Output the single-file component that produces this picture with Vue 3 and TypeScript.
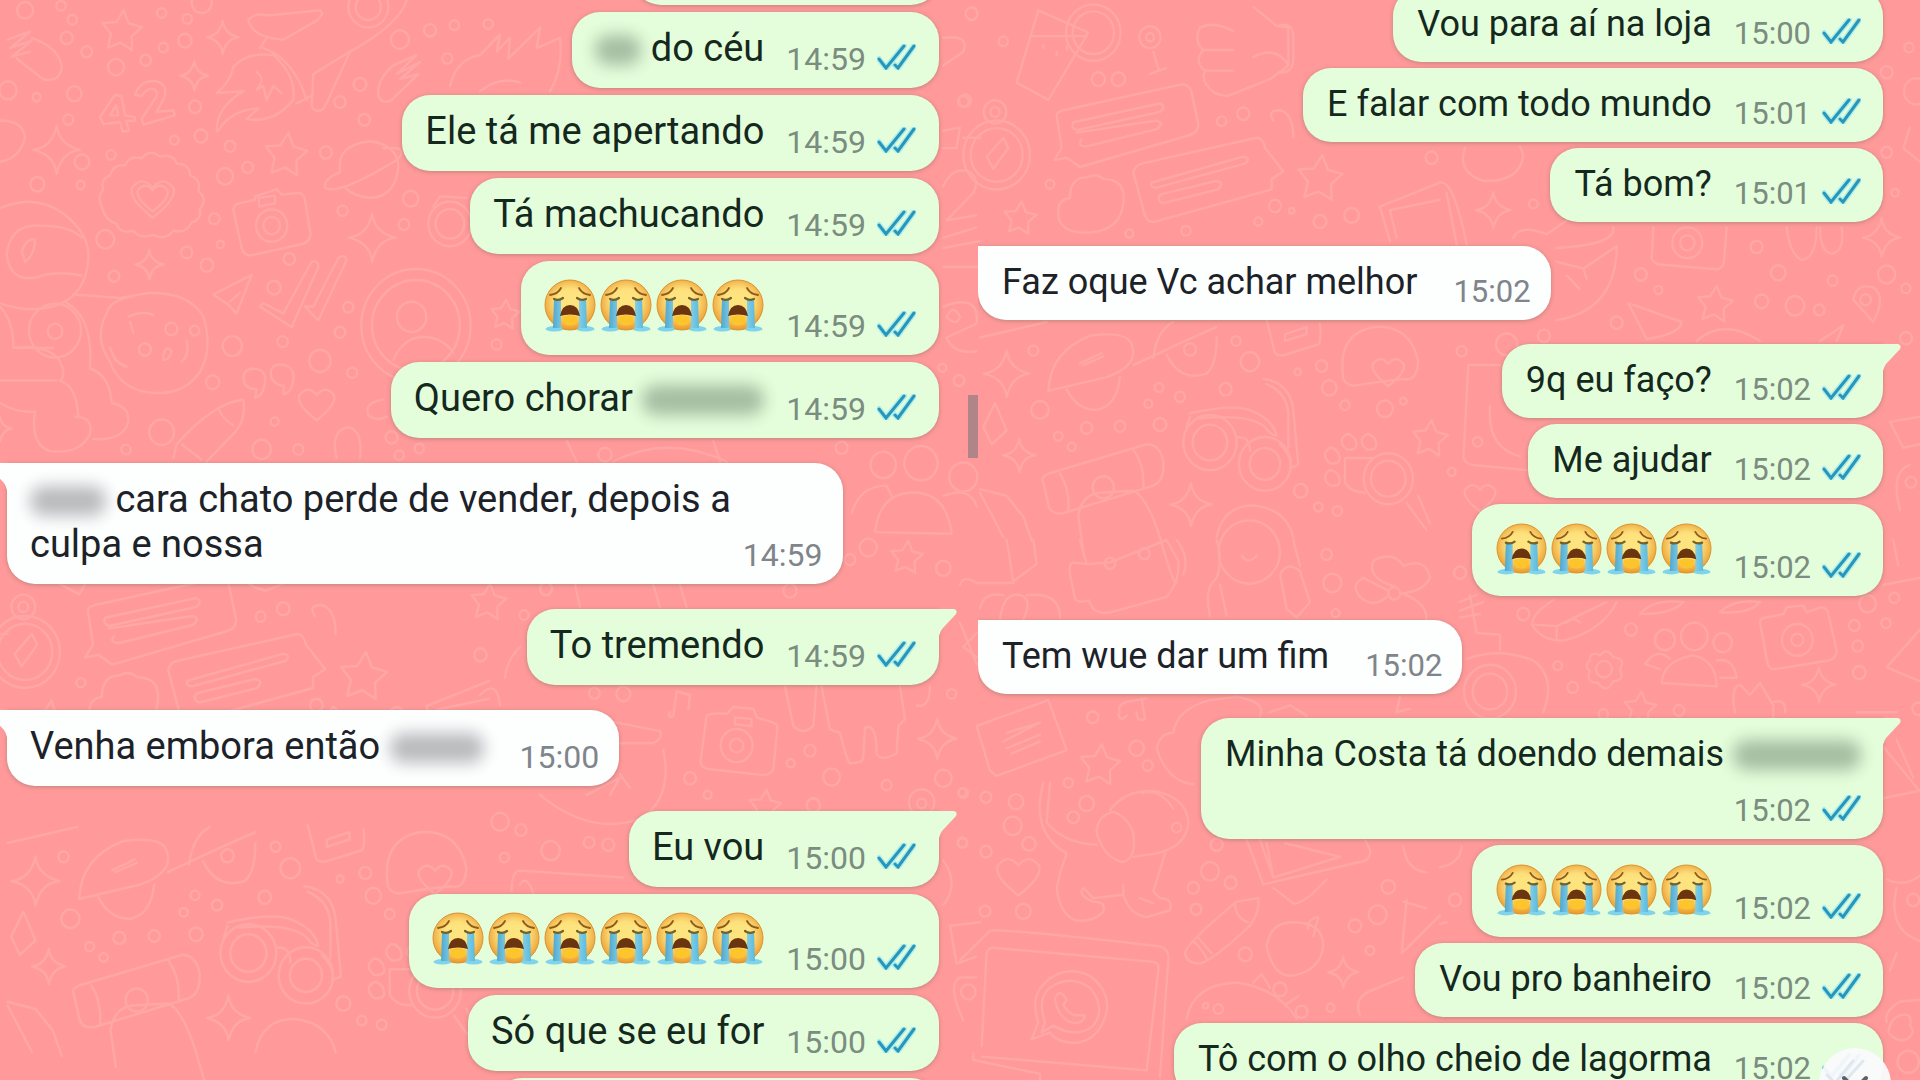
<script setup lang="ts">
interface Segment {
  text?: string
  hidden?: number
}

interface Message {
  side: 'in' | 'out'
  lines?: Segment[][]
  sobs?: number
  time?: string
  first?: boolean
  tail?: boolean
  tight?: boolean
  stacked?: boolean
  clippedWidth?: number
}

interface Doodles {
  name: string
  transform: string
  circles: number[][]
  stars: number[][]
  sparkles: number[][]
  hearts: number[][]
  paths: string[]
}

const say = (text: string): Segment[][] => [[{ text }]]

const leftMessages: Message[] = [
  { side: 'out', clippedWidth: 306 },
  { side: 'out', lines: [[{ hidden: 46 }, { text: ' do céu' }]], time: '14:59' },
  { side: 'out', lines: say('Ele tá me apertando'), time: '14:59' },
  { side: 'out', lines: say('Tá machucando'), time: '14:59' },
  { side: 'out', sobs: 4, time: '14:59' },
  { side: 'out', lines: [[{ text: 'Quero chorar ' }, { hidden: 122 }]], time: '14:59' },
  {
    side: 'in',
    first: true,
    tail: true,
    tight: true,
    lines: [[{ hidden: 76 }, { text: ' cara chato perde de vender, depois a' }], [{ text: 'culpa e nossa' }]],
    time: '14:59',
  },
  { side: 'out', first: true, tail: true, lines: say('To tremendo'), time: '14:59' },
  { side: 'in', first: true, tail: true, lines: [[{ text: 'Venha embora então ' }, { hidden: 94 }]], time: '15:00' },
  { side: 'out', first: true, tail: true, lines: say('Eu vou'), time: '15:00' },
  { side: 'out', sobs: 6, time: '15:00' },
  { side: 'out', lines: say('Só que se eu for'), time: '15:00' },
  { side: 'out', clippedWidth: 445 },
]

const rightMessages: Message[] = [
  { side: 'out', lines: say('Vou para aí na loja'), time: '15:00' },
  { side: 'out', lines: say('E falar com todo mundo'), time: '15:01' },
  { side: 'out', lines: say('Tá bom?'), time: '15:01' },
  { side: 'in', first: true, lines: say('Faz oque Vc achar melhor'), time: '15:02' },
  { side: 'out', first: true, tail: true, lines: say('9q eu faço?'), time: '15:02' },
  { side: 'out', lines: say('Me ajudar'), time: '15:02' },
  { side: 'out', sobs: 4, time: '15:02' },
  { side: 'in', first: true, lines: say('Tem wue dar um fim'), time: '15:02' },
  {
    side: 'out',
    first: true,
    tail: true,
    stacked: true,
    lines: [[{ text: 'Minha Costa tá doendo demais ' }, { hidden: 128 }]],
    time: '15:02',
  },
  { side: 'out', sobs: 4, time: '15:02' },
  { side: 'out', lines: say('Vou pro banheiro'), time: '15:02' },
  { side: 'out', lines: say('Tô com o olho cheio de lagorma'), time: '15:02' },
]

const chats = [
  { name: 'left', messages: leftMessages },
  { name: 'right', messages: rightMessages },
]

// Wallpaper sheets: circles are [x, y, r]; stars, sparkles and hearts are [x, y, size].
const travel = {
  circles: [
    [130, 120, 14], [415, 230, 20], [475, 230, 20], [570, 108, 32], [570, 108, 12], [15, 292, 18], [270, 535, 13],
    [785, 352, 14], [850, 330, 18], [105, 325, 34], [105, 325, 14], [110, 450, 100], [110, 450, 78], [400, 95, 82],
    [400, 95, 62], [945, 598, 18], [1080, 643, 19], [1175, 625, 22], [895, 643, 12], [995, 612, 8], [508, 678, 12],
    [678, 670, 14], [220, 1018, 15], [240, 1190, 26], [380, 1243, 17], [480, 1238, 16], [295, 1267, 13],
    [335, 1297, 12], [600, 1233, 19], [565, 1172, 12], [597, 1125, 13], [660, 1152, 15], [797, 1130, 18],
    [870, 1050, 28], [1085, 1063, 17], [1013, 1080, 10], [1108, 1126, 22], [1155, 1177, 14], [1275, 1187, 24],
    [1330, 1165, 10], [828, 990, 14], [750, 1285, 80], [750, 1285, 52], [915, 1347, 78], [915, 1347, 46],
    [690, 1015, 18], [1285, 1390, 74], [1285, 1390, 52], [1022, 1425, 20], [1075, 1472, 13], [1132, 1484, 14],
    [430, 1415, 32], [1415, 458, 18],
  ],
  stars: [[180, 635, 50], [1080, 520, 70], [1410, 1275, 55]],
  sparkles: [[140, 1085, 68], [178, 1322, 48], [693, 1465, 62]],
  hearts: [[1285, 1075, 46]],
  paths: [
    'M235 30L170 240L265 290L385 95Z M215 105H380 M250 130v10 M290 150v10 M320 135v10',
    'M580 150L597 205M568 215L618 198',
    'M720 80Q760 60 820 90M720 80Q700 120 730 145Q700 180 735 205Q720 240 765 270L800 280L930 230L985 190V80L950 75L880 20 M730 145H820M735 205H820 M880 165Q950 130 985 190 M955 75Q1000 60 1000 110V170Q1000 215 955 210',
    'M290 335Q290 325 310 320L665 245Q690 245 695 270L715 360Q715 385 690 392L360 485L320 458L282 465L305 430Z M340 355L600 300Q620 310 600 325L350 378Q330 370 340 355Z M350 385L590 350Q615 358 590 375L380 425Q350 425 365 405',
    'M520 500Q525 480 545 475L890 400Q910 402 915 430L970 497L935 520V550L580 645Q560 645 553 620Z M575 530L850 455Q875 460 855 475L590 545Q570 545 575 530Z M600 565L770 525Q795 530 775 550L610 590Q590 585 600 565Z',
    'M330 575Q330 515 380 515Q410 500 430 520Q500 520 490 590Q480 670 390 675Q300 680 295 625Q290 580 330 575Z',
    'M80 455L130 400L145 430L100 490Z M10 400H60',
    'M265 1135Q270 1020 390 975Q500 960 515 1000Q540 1060 440 1095ZM360 1055L425 1025M370 1060L430 1035M520 1060L620 1015Q720 970 770 950M580 1040Q590 960 640 935M320 1130Q350 1190 410 1190Q470 1180 480 1095M620 1030Q660 1110 740 1085Q770 1060 770 980',
    'M690 1210L680 1240M690 1200Q830 1170 880 1195Q940 1220 950 1265Q935 1265 920 1245Q880 1200 720 1215M910 1100Q990 1110 1000 1190L1015 1350L990 1360Q1000 1330 960 1290M920 1115Q980 1140 985 1200V1300M830 1270Q870 1265 870 1310',
    'M250 1400Q240 1385 265 1375L560 1290Q600 1290 610 1340Q615 1395 580 1410L310 1490Q270 1495 265 1465ZM300 1375Q330 1420 325 1485M520 1305Q555 1350 550 1420M370 1600L355 1500Q365 1430 430 1430L520 1425Q560 1440 600 1560Q640 1700 650 1690',
    'M920 930L945 1025Q955 1035 975 1030L1075 1000Q1085 990 1080 940M975 970L1040 950V970L975 990Z',
    'M1150 1100Q1130 970 1240 950Q1350 940 1375 1050Q1370 1110 1330 1100Q1240 1110 1180 1120Q1155 1115 1150 1100Z',
    'M1155 1330H1240M1155 1330V1400Q1170 1430 1215 1430 M1340 1460L1400 1540M1375 1440L1410 1520 M1110 1300q-30 20 0 45q40 5 25-30q-10-15-25-15Z M1160 1260q-30 20 0 45q40 5 25-30q-10-15-25-15Z M1220 1260q-30 20 0 45q40 5 25-30q-10-15-25-15Z M1110 1365q-30 20 0 45q40 5 25-30q-10-15-25-15Z',
    'M770 1560Q790 1465 885 1468Q980 1480 1000 1560',
    'M1260 600L1440 530M1260 600L1290 700M1440 580L1290 610L1310 690',
    'M60 980L260 935M95 1290L70 1240L105 1170L140 1250Z M60 1420L140 1440L190 1500L215 1570M60 1430L130 1560',
    'M940 350Q920 320 960 320Q1000 330 1000 400',
  ],
}

const space = {
  name: 'space',
  transform: 'scale(.3333 .3444)',
  circles: [
    [75, 30, 24], [183, 17, 14], [217, 57, 14], [200, 110, 18], [260, 150, 16], [348, 195, 24], [437, 175, 16],
    [490, 138, 14], [555, 118, 20], [485, 38, 14], [605, 8, 30], [562, 55, 14], [24, 262, 26], [110, 282, 12],
    [223, 272, 22], [205, 347, 15], [585, 310, 18], [603, 395, 19], [523, 407, 13], [690, 425, 16], [743, 486, 16],
    [675, 512, 24], [246, 470, 22], [333, 450, 14], [112, 535, 21], [242, 537, 12], [643, 635, 16], [316, 695, 27],
    [342, 802, 16], [560, 733, 17], [621, 770, 19], [661, 710, 11], [1105, 20, 60], [1105, 20, 38], [1200, 115, 27],
    [1290, 88, 18], [1363, 73, 14], [1342, 170, 15], [1080, 245, 19], [1020, 296, 17], [1093, 348, 17],
    [978, 443, 18], [1232, 577, 23], [1212, 652, 16], [1028, 612, 15], [815, 655, 47], [815, 655, 25],
    [868, 752, 17], [822, 835, 20], [1045, 892, 15], [1020, 965, 16], [848, 992, 16], [697, 1005, 29],
    [960, 1048, 32], [638, 1110, 20], [1057, 1082, 15], [824, 1224, 12], [785, 1305, 28], [485, 1255, 37],
    [895, 1305, 15], [378, 1305, 14], [1248, 945, 164], [1248, 945, 132], [1235, 920, 44], [514, 955, 18],
    [584, 960, 14], [435, 1015, 18], [165, 960, 78], [165, 962, 22], [1350, 650, 65], [1350, 650, 43],
    [1175, 1270, 18], [1198, 1322, 14], [1258, 1302, 14],
  ],
  stars: [[365, 92, 62], [858, 452, 66]],
  sparkles: [[170, 435, 70], [668, 108, 48], [583, 220, 42], [1117, 690, 70], [448, 768, 42], [0, 1245, 35]],
  hearts: [[458, 570, 62], [458, 570, 44], [950, 1168, 52]],
  paths: [
    'M22 115L90 92L30 140L95 118L35 165L90 150M95 110Q180 140 185 195Q180 240 130 230L50 170',
    'M300 340L345 275L365 280L375 335L405 340V350L378 352L388 380L368 382L360 355L310 360ZM330 335L348 305L355 335Z',
    'M405 275Q420 235 460 235Q510 240 490 290L470 325L520 320L525 335L430 362L425 345L470 280Q475 255 450 258Q435 262 425 280Z',
    'M745 60Q760 35 800 45L960 30Q975 40 950 60L850 115Q760 110 745 60Z',
    'M650 380Q650 310 730 265L650 270Q690 240 700 195Q740 150 820 160Q890 220 880 290Q820 360 740 345L775 315Q690 320 655 380ZM790 140Q880 170 920 290M780 140L800 110M770 210Q800 230 770 260L790 250L800 290L820 250L845 270',
    'M940 215L1050 150L975 310Q955 335 935 310ZM1050 150Q1200 70 1220 0M890 300L940 275',
    'M1135 280Q1130 230 1180 190L1250 160L1190 215L1260 180L1200 230L1255 215L1175 290Q1150 305 1135 280Z',
    'M1020 495Q1010 420 1110 410Q1190 420 1195 480Q1190 570 1110 575Q1060 570 1035 545M1020 500Q970 520 975 545Q1010 570 1190 465Q1220 440 1190 430L1150 430',
    'M305 600Q290 570 310 550Q300 520 330 510Q340 475 375 480Q390 450 425 460Q450 430 480 455Q520 445 530 475Q570 475 570 510Q605 520 595 555Q625 580 600 605Q605 640 575 645Q560 680 520 670Q495 700 460 682Q420 695 400 670Q360 680 350 650Q315 640 305 600Z',
    'M700 610Q700 595 720 590L765 580V570L830 550L845 565L895 560Q910 560 915 580L932 680Q930 705 900 710L750 742Q730 740 725 720ZM775 575L825 568V590L778 600Z',
    'M640 855L755 798L710 910L685 885Z M690 875L720 850',
    'M780 890L790 880L850 910L935 760Q955 755 955 775L875 950ZM915 890L940 890L1015 750Q1035 735 1040 755L955 930Z',
    'M1180 1045Q1210 980 1270 978Q1330 980 1360 1025',
    'M0 605Q100 560 190 620Q270 680 265 750Q260 860 160 890Q80 910 0 880M20 740Q30 650 120 655Q210 655 245 690M20 740Q30 820 110 805Q170 785 245 800M65 730Q80 690 105 695Q105 740 75 760Z',
    'M220 855L360 865L450 850Q570 850 610 920Q640 1010 600 1080Q550 1150 450 1140Q360 1130 330 1050Q280 980 320 910Q330 870 400 860M385 920Q430 900 460 915M390 935L400 965M330 1010Q350 1060 380 1065L345 1045ZM490 1030Q500 1000 515 1020Q510 1045 490 1045ZM545 1050Q570 1030 560 990',
    'M0 890Q40 930 40 1010H160M40 1010Q150 1000 180 1050Q200 1090 180 1105Q230 1120 235 1210M0 1105H170M0 1170Q50 1200 105 1195M105 1195Q90 1290 150 1310Q240 1320 270 1260Q280 1210 225 1210M200 880Q280 920 270 1070Q330 1090 335 1170Q390 1180 385 1225Q370 1280 280 1275',
    'M735 1115Q720 1080 755 1070Q800 1070 795 1110Q790 1150 765 1155L770 1130Q745 1130 735 1115ZM815 1100Q805 1060 840 1058Q885 1060 880 1105Q875 1140 850 1145L852 1120Q830 1120 815 1100Z',
    'M520 1330L530 1290Q640 1170 730 1160Q740 1220 700 1260L620 1340M545 1290L605 1335M655 1185Q670 1220 700 1235',
    'M1010 1330Q990 1250 1045 1240Q1090 1250 1080 1330M1150 1160Q1090 1170 1105 1205Q1130 1225 1160 1210',
    'M0 350Q70 350 75 400Q60 460 0 470M1350 250Q1370 170 1440 160M1300 600L1320 570L1400 575',
  ],
}

const sheets: Doodles[] = [
  space,
  { name: 'travel-right', transform: 'translate(960 0) scale(.3333 .3444)', ...travel },
  { name: 'travel-left', transform: 'translate(0 540) scale(.3333 .3444) translate(-40 -146) scale(1.047)', ...travel },
  {
    name: 'middle',
    transform: 'translate(480 0) scale(.3333 .3444)',
    circles: [[25, 70, 14], [1475, 40, 18], [1450, 295, 16], [50, 1000, 15], [1437, 1105, 16], [1387, 1068, 12], [1085, 1300, 18], [375, 1320, 20], [1323, 1345, 50], [1210, 1350, 38], [1450, 1385, 42], [1110, 1625, 16], [1165, 1590, 26], [1390, 1650, 22], [930, 1715, 20]],
    stars: [[75, 915, 45], [1280, 1620, 50], [25, 1750, 55]],
    sparkles: [],
    hearts: [],
    paths: [
      'M0 160L60 100L50 150L90 110L85 170L180 80L170 140L240 110Q250 200 210 265M0 265Q60 220 120 240',
      'M1390 110Q1470 100 1450 150L1390 190M1390 380L1440 370L1430 430H1390M1390 540Q1420 480 1470 500Q1500 520 1480 560L1400 640L1490 625',
      'M1390 690L1490 660M1390 720L1500 700M1390 775H1500',
      'M1390 890Q1500 850 1490 940L1400 980Q1420 1030 1490 1020M1400 920Q1420 880 1440 920Q1430 950 1400 920Z',
      'M1185 1545Q1200 1430 1300 1430Q1400 1430 1415 1550ZM1115 1490Q1140 1410 1220 1410L1235 1440M1390 1440Q1470 1410 1490 1470',
      'M400 1340Q560 1260 740 1340M260 1280L290 1340M700 1280L720 1340',
    ],
  },
  {
    name: 'top-right',
    transform: 'translate(1440 0) scale(.3333 .3444)',
    circles: [[1407, 138, 14], [1340, 210, 18], [1430, 265, 38], [1340, 442, 16], [280, 592, 13], [1365, 560, 11], [742, 705, 45], [742, 705, 22], [950, 717, 18], [603, 797, 18], [655, 842, 12], [1015, 792, 22], [1178, 815, 15], [1340, 797, 26], [1398, 837, 14], [965, 875, 20], [1065, 888, 28], [1138, 900, 16], [1277, 870, 16], [530, 937, 18], [65, 1020, 15], [200, 1000, 32], [312, 975, 18], [113, 1283, 14], [1398, 982, 18], [1413, 1400, 16], [35, 1370, 12]],
    stars: [[825, 885, 55]],
    sparkles: [[160, 610, 52], [1325, 690, 56]],
    hearts: [[120, 1440, 45]],
    paths: [
      'M75 430Q50 500 130 525Q240 530 250 450L240 425M0 530Q40 520 80 710M20 560L50 710',
      'M640 660L635 750Q640 765 660 768L830 782Q850 780 852 760L860 660M1040 660Q1050 740 1085 755Q1130 750 1130 660M1140 660Q1140 730 1175 737Q1215 730 1205 660',
      'M220 690Q240 650 320 680L380 640M350 720Q530 710 520 660M350 760L430 780L530 715Q530 900 350 930M380 800L420 840M430 780L440 810',
      'M565 880L725 935Q720 970 620 985ZM770 990Q850 920 960 990M1240 870Q1250 820 1300 835Q1340 860 1300 935ZM1140 990L1210 945L1190 990',
      'M85 1060L70 1330Q80 1350 100 1350L260 1365M85 1060H180M150 1180Q140 1300 240 1325M1410 370L1390 430L1440 470M1350 1225L1440 1210M1350 1225L1390 1300L1440 1290M1380 1480Q1350 1370 1410 1350',
    ],
  },
  {
    name: 'bottom-middle',
    transform: 'translate(480 540) scale(.3333 .3444)',
    circles: [[198, 142, 18], [132, 218, 14], [343, 445, 16], [430, 447, 21], [770, 597, 48], [770, 597, 20], [990, 612, 17], [932, 648, 12], [630, 692, 18], [683, 740, 12], [1055, 688, 25], [1220, 712, 15], [1390, 692, 25], [1447, 733, 12], [1325, 762, 38], [1325, 765, 14], [60, 818, 26], [123, 842, 17], [327, 878, 16], [385, 885, 18], [73, 922, 14], [212, 902, 28], [1447, 878, 14], [1415, 447, 14], [1465, 1312, 22], [1000, 770, 20]],
    stars: [[855, 775, 50]],
    sparkles: [[1372, 577, 58]],
    hearts: [],
    paths: [
      'M680 510Q700 500 740 505L760 485L820 490L830 515L880 530Q895 535 892 550L880 665Q870 685 845 682L685 665Q660 660 662 640ZM765 515L815 520V540L765 535Z',
      'M915 425L940 540Q970 570 1000 540L1010 425M1025 425L1050 550L1080 560Q1100 640 1110 648Q1150 650 1150 630L1155 545Q1190 530 1190 620Q1200 645 1250 620L1255 540L1275 520L1260 425M1350 425Q1350 490 1310 480',
      'M385 525L540 555Q550 575 520 590L400 590M550 610Q580 750 480 810Q330 860 180 740M320 740L420 690L390 740M450 720L420 680',
      'M95 1020Q95 960 120 960L430 980M120 1000Q140 970 160 1025M1390 930Q1440 1000 1390 1060M1410 1120L1500 1110M1410 1120L1430 1230L1490 1210M1450 1395Q1400 1290 1440 1270L1490 1270M570 500Q560 520 580 510L590 440L630 450L625 490M285 130L300 195M520 130L540 195M600 130L620 195',
      'M75 400Q80 350 120 310M1490 270L1450 310L1490 340M0 450Q50 400 60 480',
    ],
  },
  {
    name: 'pets',
    transform: 'translate(960 540) scale(.3333 .3444)',
    circles: [[450, 68, 16], [553, 40, 16], [868, 35, 92], [1100, 42, 16], [1117, 125, 27], [1127, 212, 12], [1303, 155, 18], [398, 515, 17], [530, 605, 22], [563, 655, 15], [325, 705, 14], [380, 765, 22], [340, 805, 17], [78, 747, 16], [168, 760, 22], [158, 830, 27], [207, 882, 20], [78, 905, 17], [10, 735, 14], [8, 880, 14], [75, 1078, 16], [190, 1078, 22], [750, 962, 27], [812, 995, 18], [700, 1010, 17], [708, 1072, 16], [856, 1203, 20], [1285, 1007, 20], [1253, 1088, 27], [1185, 1120, 19], [1230, 1192, 13], [1025, 1370, 18], [960, 1305, 20], [1112, 1358, 12], [775, 1362, 14], [737, 1352, 8], [650, 835, 14], [770, 885, 18]],
    stars: [[420, 655, 62]],
    sparkles: [[1150, 1255, 45]],
    hearts: [[175, 970, 62]],
    paths: [
      'M360 0L380 70L340 65Q325 70 330 100L345 170Q355 185 385 175L400 200Q430 220 470 205L620 165Q660 120 655 60L620 0M380 70L450 65L620 0M650 0Q690 50 670 100',
      'M770 0Q790 60 770 110Q730 140 750 220M780 130L800 220M1000 0L1020 75M960 100Q980 60 1020 90L1050 180L1010 225L980 200Z M845 45Q865 75 890 45',
      'M1303 135Q1220 110 1240 60Q1300 30 1330 75Q1400 50 1410 110Q1390 150 1325 155Q1400 180 1400 230M1280 165Q1240 200 1200 165Q1170 130 1210 110L1280 145',
      'M140 0L160 120L230 70L220 0M0 130Q10 100 50 125H160M60 200Q70 150 130 160M120 230Q130 150 180 160Q220 170 190 230M200 160Q300 150 300 225M0 240L50 360',
      'M50 540L265 465Q290 530 320 610L110 685L90 670ZM140 560L240 530L130 585M140 605L240 565M155 620L240 585',
      'M480 500Q470 480 500 470L560 460M500 510Q480 530 475 505M545 460L555 520Q530 530 530 500M590 605Q600 560 640 560Q650 490 750 465L830 455Q920 470 900 510M590 605Q620 700 700 710M930 500L990 480L1040 510M1320 455L1310 500L1350 490',
      'M270 705L260 820Q310 880 410 885M250 705Q210 850 320 910Q300 960 290 1010Q300 1090 350 1105Q400 1110 430 1080Q440 1050 400 1050Q350 1030 370 1010L400 1040L490 1030Q510 1090 560 1095L630 1075Q640 1040 600 1040L580 1020L615 910M410 850Q410 800 460 790Q500 800 520 850Q530 930 485 935Q430 920 410 850ZM450 785Q500 720 590 730Q680 750 685 820Q680 890 590 910L520 920M490 1030V1000M540 1040L580 1055M545 735Q600 720 640 780',
      'M860 870L910 1000L1200 935Q1235 930 1230 900L1215 870M920 880L940 980L1140 920M975 880L1140 920M900 870L940 980M940 1010L1000 1055Q1030 1060 1100 985M1330 890Q1340 960 1400 965M1340 1045L1325 1200L1440 1090M1330 1050L1400 1070',
      'M675 1200Q680 1170 830 1050L895 1040Q900 1080 870 1120Q760 1220 720 1230Q680 1230 675 1200ZM825 1060Q830 1100 865 1110M700 1165Q720 1180 740 1215M715 1155L755 1200',
      'M1000 1110Q930 1110 920 1180Q940 1270 1000 1265Q1080 1250 1090 1180Q1090 1110 1000 1110ZM1045 1130Q1040 1100 1075 1095L1060 1150',
      'M65 1470L80 1200Q85 1180 110 1185L580 1225Q600 1230 595 1250L560 1540L65 1500M0 1220L90 1135Q110 1125 600 1180Q630 1190 625 1220L600 1560M40 1490V1510L240 1550V1570M215 1450L235 1400Q210 1330 250 1290Q310 1230 390 1265Q450 1310 440 1370Q420 1450 350 1460Q290 1460 270 1430ZM245 1430L255 1400Q230 1330 270 1300Q330 1260 390 1300Q440 1360 400 1410Q350 1450 280 1410ZM285 1330Q300 1300 320 1335L310 1350Q325 1375 345 1380L375 1380Q370 1410 330 1400Q290 1380 285 1330Z',
      'M680 1390Q700 1290 830 1285Q950 1300 1010 1390M880 1285L905 1260L930 1300M975 1350L1015 1325M1200 1380Q1180 1330 1230 1310L1330 1270',
    ],
  },
  {
    name: 'garden',
    transform: 'translate(1440 540) scale(.3333 .3444)',
    circles: [[573, 260, 18], [250, 215, 18], [353, 365, 13], [398, 428, 16], [492, 375, 24], [675, 290, 30], [763, 280, 40], [848, 298, 28], [1072, 290, 46], [1072, 290, 18], [1243, 248, 16], [1338, 242, 14], [1253, 308, 16], [1258, 385, 19], [1283, 185, 25], [1363, 168, 15], [150, 440, 78], [150, 440, 52], [717, 495, 16], [490, 505, 14], [60, 95, 18], [45, 1045, 18], [1420, 1045, 18], [1405, 1515, 32], [1435, 490, 18]],
    stars: [[600, 490, 50]],
    sparkles: [[1137, 420, 50]],
    hearts: [],
    paths: [
      'M275 245Q280 210 340 175M275 245Q310 300 380 290Q490 260 530 180M275 245L350 250L500 180M350 250V285M380 240Q400 220 420 240M60 180L110 160M60 205L130 180M60 225L120 215M90 160L110 270L180 275V320M80 345Q180 310 280 350Q350 400 310 500',
      'M450 350Q450 320 480 335Q500 310 520 340Q560 345 540 375Q555 410 520 410Q500 450 475 415Q435 415 450 380Q430 365 450 350Z',
      'M665 415Q670 350 760 335Q830 350 830 425ZM615 360Q650 310 690 345M830 350Q880 340 890 400H840M615 360L660 375',
      'M960 240Q960 225 980 225L1030 215L1040 195L1090 190L1100 210L1145 195Q1165 200 1165 215L1190 320Q1190 345 1165 350L1005 375Q985 375 982 355Z',
      'M885 500Q870 430 900 420L930 450L960 415L1000 480V515M1000 470Q1040 460 1035 500M1340 370L1440 260M1340 370L1440 410M600 215Q640 170 730 180Q700 215 600 215ZM840 210Q880 170 960 180Q930 215 840 210ZM1360 0L1375 75M1330 130L1440 110',
      'M1330 600L1440 730M1370 580L1420 690M1250 500L1370 500M1330 750L1430 730M0 950Q60 940 65 890M0 1115L20 1110M1340 985Q1390 1010 1440 975M1370 1010Q1340 1130 1440 1165M1370 1200L1350 1250M1340 1400Q1330 1370 1380 1340L1440 1335M1380 1380Q1420 1370 1410 1410Q1430 1430 1400 1450Q1370 1460 1345 1430Q1350 1390 1380 1380Z',
    ],
  },
]

function starPath([x, y, s]: number[]): string {
  const points: string[] = []
  for (let i = 0; i < 10; i++) {
    const radius = i % 2 ? s * 0.52 : s
    const angle = (i * Math.PI) / 5 - Math.PI / 2 + 0.1
    points.push(`${Math.round(x + radius * Math.cos(angle))} ${Math.round(y + radius * Math.sin(angle))}`)
  }
  return `M${points.join('L')}Z`
}

function sparklePath([x, y, s]: number[]): string {
  return `M${x} ${y - s}Q${x + s * 0.1} ${y - s * 0.2} ${x + s} ${y}Q${x + s * 0.2} ${y + s * 0.1} ${x} ${y + s}Q${x - s * 0.1} ${y + s * 0.2} ${x - s} ${y}Q${x - s * 0.2} ${y - s * 0.1} ${x} ${y - s}Z`
}

function heartPath([x, y, s]: number[]): string {
  return `M${x} ${y + s}Q${x - s * 1.2} ${y + s * 0.1} ${x - s} ${y - s * 0.4}Q${x - s * 0.5} ${y - s} ${x} ${y - s * 0.4}Q${x + s * 0.5} ${y - s} ${x + s} ${y - s * 0.4}Q${x + s * 1.2} ${y + s * 0.1} ${x} ${y + s}Z`
}
</script>

<template>
  <main class="screen">
    <svg class="wallpaper" viewBox="0 0 1920 1080" preserveAspectRatio="xMidYMid slice" aria-hidden="true">
      <defs>
        <linearGradient id="face" x1="0" y1="0" x2="0" y2="1">
          <stop offset="0" stop-color="#f3b43f" />
          <stop offset="0.3" stop-color="#fbd968" />
          <stop offset="0.7" stop-color="#fbd258" />
          <stop offset="1" stop-color="#f5a81f" />
        </linearGradient>
        <radialGradient id="glow" cx="0.5" cy="0.45" r="0.55">
          <stop offset="0.5" stop-color="#ffe98a" stop-opacity="0.7" />
          <stop offset="1" stop-color="#e8922b" stop-opacity="0.8" />
        </radialGradient>
        <linearGradient id="tear" x1="0" y1="0" x2="1" y2="0">
          <stop offset="0" stop-color="#4fa9cf" />
          <stop offset="0.5" stop-color="#a6e6f6" />
          <stop offset="1" stop-color="#5cbadb" />
        </linearGradient>
      </defs>
      <g v-for="sheet in sheets" :key="sheet.name" :transform="sheet.transform">
        <circle v-for="(c, i) in sheet.circles" :key="'c' + i" :cx="c[0]" :cy="c[1]" :r="c[2]" />
        <path v-for="(s, i) in sheet.stars" :key="'s' + i" :d="starPath(s)" />
        <path v-for="(s, i) in sheet.sparkles" :key="'k' + i" :d="sparklePath(s)" />
        <path v-for="(h, i) in sheet.hearts" :key="'h' + i" :d="heartPath(h)" />
        <path v-for="(d, i) in sheet.paths" :key="'p' + i" :d="d" />
      </g>
    </svg>

    <section v-for="chat in chats" :key="chat.name" class="chat" :class="chat.name">
      <ol class="messages">
        <li
          v-for="(m, i) in chat.messages"
          :key="i"
          class="bubble"
          :class="[m.side, { first: m.first, tail: m.tail, tight: m.tight, stacked: m.stacked }]"
          :style="m.clippedWidth ? { width: m.clippedWidth + 'px' } : undefined"
        >
          <svg v-if="m.tail" class="tip" viewBox="0 0 18 27" aria-hidden="true">
            <path d="M0 0H15Q19 1 17 5L3 20Q1 23 0 27Z" />
          </svg>
          <div v-if="m.sobs" class="sobs" role="img" aria-label="😭">
            <svg v-for="n in m.sobs" :key="n" class="sob" viewBox="0 0 52 53">
              <circle cx="26" cy="26" r="25" fill="url(#face)" />
              <circle cx="26" cy="26" r="25" fill="url(#glow)" stroke="#d99530" stroke-width="1" />
              <path d="M6 16Q14 15 17 9M46 16Q38 15 35 9" fill="none" stroke="#8b5a1c" stroke-width="1.8" stroke-linecap="round" />
              <path d="M9 47Q0 48 2 51Q10 54 19 51L17 47ZM43 47Q52 48 50 51Q42 54 33 51L35 47Z" fill="#7fd3ea" />
              <path d="M10 20H17V49H9ZM35 20H42L43 49H35Z" fill="url(#tear)" />
              <path d="M10 20Q15 22 19 19M42 20Q37 22 33 19" fill="none" stroke="#75602a" stroke-width="2.2" stroke-linecap="round" />
              <path d="M16 37Q18 26 26 26Q34 26 36 37Q26 34 16 37Z" fill="#6b3510" />
              <path d="M18 38Q26 34 34 38L32 45Q26 48 20 45Z" fill="#fcc52c" />
            </svg>
          </div>
          <p v-if="m.lines" class="text">
            <span v-for="(line, l) in m.lines" :key="l" class="line">
              <template v-for="(part, p) in line" :key="p"
                ><span v-if="part.hidden" class="hidden" :style="{ width: part.hidden + 'px' }"></span
                ><template v-else>{{ part.text }}</template></template
              >
            </span>
          </p>
          <span v-if="m.time" class="meta">
            <time>{{ m.time }}</time>
            <svg v-if="m.side === 'out'" class="ticks" viewBox="0 0 39 26" role="img" aria-label="Lida">
              <path class="halo" d="M2 15L9 24L27 2M18 21L21 24L37 2" />
              <path d="M2 15L9 24L27 2M18 21L21 24L37 2" />
            </svg>
          </span>
        </li>
      </ol>
      <span v-if="chat.name === 'left'" class="handle"></span>
      <button v-else class="jump" type="button" aria-label="Ir para o fim">
        <svg viewBox="0 0 72 72" aria-hidden="true">
          <path class="ghost" d="M8 27L16 35L34 13M26 33L44 13" />
          <path d="M25 30L36 41L47 30M25 42L36 53L47 42" />
        </svg>
      </button>
    </section>
  </main>
</template>

<style>
body {
  margin: 0;
}
</style>

<style scoped>
.screen {
  position: relative;
  display: grid;
  grid-template-columns: minmax(0, 978fr) minmax(0, 942fr);
  height: 100vh;
  overflow: hidden;
  background: #ff999a;
  font-family: Roboto, 'Liberation Sans', sans-serif;
}

.wallpaper {
  position: absolute;
  inset: 0;
  width: 100%;
  height: 100%;
  fill: none;
  stroke: #ffa7a5;
  stroke-width: 7;
  stroke-linecap: round;
  stroke-linejoin: round;
}

.chat {
  position: relative;
  min-width: 0;
  height: 100vh;
  overflow: hidden;
}

.messages {
  display: flex;
  flex-direction: column;
  align-items: flex-start;
  margin: 0;
  list-style: none;
}

.left .messages {
  gap: 7px;
  margin-top: -71px;
  padding: 0 39px 0 7px;
}

.right .messages {
  gap: 6px;
  margin-top: -12px;
  padding: 0 37px 0 0;
}

.bubble {
  position: relative;
  display: flex;
  flex-shrink: 0;
  align-items: flex-end;
  box-sizing: border-box;
  border-radius: 28px;
  box-shadow: 0 1px 4px rgba(100, 100, 80, 0.4);
}

.left .bubble {
  min-height: 76px;
  padding: 14px 23px 17px;
}

.right .bubble {
  min-height: 74px;
  padding: 14px 22px 16px 24px;
}

.out {
  align-self: flex-end;
  gap: 22px;
  background: #e4fedb;
  color: #15281e;
}

.in {
  gap: 36px;
  background: #fdfefe;
  color: #1c2228;
}

.left .in {
  padding-right: 20px;
}

.right .in {
  padding-right: 20px;
  border-top-left-radius: 0;
}

.in.tight {
  gap: 12px;
}

.first {
  margin-top: 18px;
}

.out.tail {
  border-top-right-radius: 0;
}

.in.tail {
  border-top-left-radius: 0;
}

.tip {
  position: absolute;
  top: 0;
  left: 100%;
  width: 18px;
  height: 27px;
  fill: #e4fedb;
}

.in .tip {
  right: 100%;
  left: auto;
  fill: #fdfefe;
  transform: scaleX(-1);
}

.text {
  margin: 0;
  white-space: pre;
}

.line {
  display: block;
}

.left .text {
  font-size: 38px;
  line-height: 45px;
}

.right .text {
  font-size: 36px;
  line-height: 44px;
}

.hidden {
  display: inline-block;
  height: 30px;
  border-radius: 14px;
  background: currentColor;
  opacity: 0.3;
  vertical-align: -4px;
  filter: blur(8px);
}

.meta {
  display: flex;
  align-items: baseline;
  gap: 11px;
  line-height: 24px;
  color: #7b8c80;
}

.in .meta {
  color: #7f858a;
}

.left .meta {
  font-size: 32px;
}

.right .meta {
  font-size: 31px;
}

.stacked {
  flex-direction: column;
  gap: 0;
}

.stacked .text {
  align-self: flex-start;
}

.stacked .meta {
  margin-top: 19px;
}

.ticks {
  width: 39px;
  height: 26px;
  fill: none;
  stroke: #2896bb;
  stroke-width: 3;
  stroke-linecap: round;
}

.ticks .halo {
  stroke: #6fdcfb;
  stroke-width: 6;
  opacity: 0.45;
}

.sobs {
  display: flex;
  gap: 4px;
}

.left .sobs {
  padding: 4px 0 6px;
}

.right .sobs {
  padding: 5px 0 5px;
}

.sob {
  width: 52px;
  height: 53px;
}

.right .sob {
  width: 51px;
  height: 52px;
}

.handle {
  position: absolute;
  top: 395px;
  right: 0;
  width: 10px;
  height: 63px;
  background: #b0858a;
}

.jump {
  position: absolute;
  right: 29px;
  bottom: -40px;
  width: 72px;
  height: 72px;
  padding: 0;
  border: 0;
  border-radius: 50%;
  background: rgba(250, 250, 252, 0.95);
}

.jump svg {
  display: block;
  width: 72px;
  height: 72px;
  fill: none;
  stroke: #5a6268;
  stroke-width: 4;
  stroke-linecap: round;
}

.jump .ghost {
  stroke: #dfe8f0;
  stroke-width: 3;
}
</style>
